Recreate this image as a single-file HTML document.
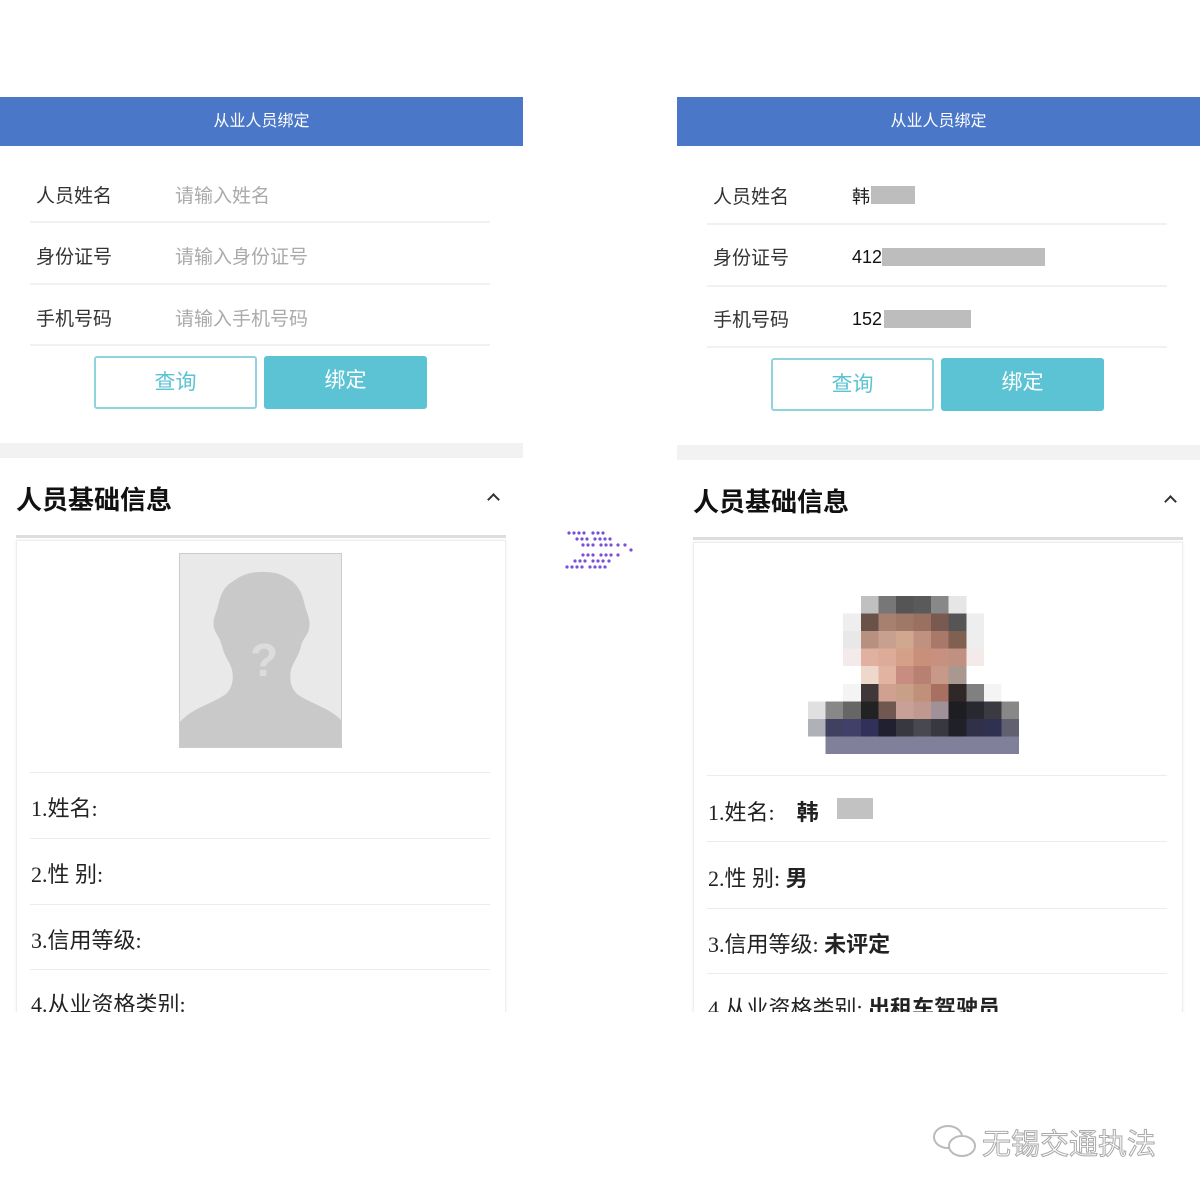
<!DOCTYPE html>
<html><head><meta charset="utf-8">
<style>
*{margin:0;padding:0;box-sizing:border-box}
body{width:1200px;height:1193px;background:#fff;position:relative;overflow:hidden;font-family:"Liberation Sans","Noto Sans CJK SC",sans-serif}
.a{position:absolute}
.panel{position:absolute;width:523px;height:915px;background:#fff;overflow:hidden}
.hdr{position:absolute;left:0;top:0;width:100%;height:49px;background:#4a77c8;color:#fff;font-size:16px;text-align:center;line-height:49px}
.lbl{position:absolute;left:36px;font-size:19px;color:#333}
.ph{position:absolute;left:175px;font-size:19px;color:#aaa}
.ln{position:absolute;left:30px;width:460px;height:2px;background:#f1f1f1}
.btn{position:absolute;top:259px;width:163px;height:53px;border-radius:3px;font-size:21px;text-align:center;line-height:50px}
.b1{left:94px;border:2px solid #8fd3de;color:#5bc3d3;background:#fff}
.b2{left:264px;background:#5bc3d3;color:#fff}
.band{position:absolute;left:0;top:346px;width:100%;height:15px;background:#f2f2f2}
.ttl{position:absolute;left:16px;top:383px;font-size:26px;font-weight:bold;color:#111}
.chev{position:absolute;left:489px;top:398px;width:9px;height:9px;border-left:2px solid #333;border-top:2px solid #333;transform:rotate(45deg)}
.tl{position:absolute;left:16px;top:438px;width:490px;height:3px;background:#ddd}
.card{position:absolute;left:16px;top:443px;width:490px;height:500px;border:1px solid #eee;border-bottom:none;box-shadow:0 0 3px #eee}
.il{position:absolute;left:30px;width:460px;height:1px;background:#ececec}
.it{position:absolute;left:31px;font-size:22px;color:#222;font-family:"Liberation Serif","Noto Sans CJK SC",serif}
.it b{font-family:"Liberation Sans","Noto Sans CJK SC",sans-serif}
</style></head><body>

<!-- LEFT -->
<div class="panel" style="left:0;top:97px">
  <div class="hdr">从业人员绑定</div>
  <div class="lbl" style="top:84px">人员姓名</div><div class="ph" style="top:84px">请输入姓名</div>
  <div class="ln" style="top:124px"></div>
  <div class="lbl" style="top:145px">身份证号</div><div class="ph" style="top:145px">请输入身份证号</div>
  <div class="ln" style="top:186px"></div>
  <div class="lbl" style="top:207px">手机号码</div><div class="ph" style="top:207px">请输入手机号码</div>
  <div class="ln" style="top:247px"></div>
  <div class="btn b1">查询</div><div class="btn b2">绑定</div>
  <div class="band"></div>
  <div class="ttl">人员基础信息</div><div class="chev"></div>
  <div class="tl"></div>
  <div class="card"></div>
  <div class="a" style="left:179px;top:456px;width:163px;height:195px;background:#e9e9e9;border:1px solid #ccc;overflow:hidden">
    <svg width="163" height="195" viewBox="0 0 163 195">
      <path d="M82 18c-14 0-22 4-30 10-10 6-12 16-14 24-2 8-6 14-4 22 2 6 6 10 8 18 2 10 8 16 10 24 2 10 0 18-6 24-14 10-34 14-46 28v27h163v-27c-12-14-32-18-46-28-6-6-8-14-6-24 2-8 8-14 10-24 2-8 8-12 8-18 2-8-2-14-4-22-2-10-6-22-18-28-8-5-14-6-24-6z" fill="#c9c9c9"/>
      <text x="70" y="122" font-size="46" font-weight="bold" fill="#dcdcdc" font-family="Liberation Sans">?</text>
    </svg>
  </div>
  <div class="il" style="top:675px"></div>
  <div class="it" style="top:694px">1.姓名:</div>
  <div class="il" style="top:741px"></div>
  <div class="it" style="top:760px">2.性 别:</div>
  <div class="il" style="top:807px"></div>
  <div class="it" style="top:826px">3.信用等级:</div>
  <div class="il" style="top:872px"></div>
  <div class="it" style="top:890px">4.从业资格类别:</div>
</div>

<!-- ARROW -->
<svg class="a" style="left:563px;top:529px" width="72" height="44">
  <g fill="#7a4fd8">
    <circle cx="6" cy="4" r="1.6"/><circle cx="11" cy="4" r="1.6"/><circle cx="16" cy="4" r="1.6"/><circle cx="21" cy="4" r="1.6"/><circle cx="30" cy="4" r="1.6"/><circle cx="35" cy="4" r="1.6"/><circle cx="40" cy="4" r="1.6"/>
    <circle cx="14" cy="10" r="1.6"/><circle cx="19" cy="10" r="1.6"/><circle cx="24" cy="10" r="1.6"/><circle cx="32" cy="10" r="1.6"/><circle cx="37" cy="10" r="1.6"/><circle cx="42" cy="10" r="1.6"/><circle cx="47" cy="10" r="1.6"/>
    <circle cx="20" cy="16" r="1.6"/><circle cx="25" cy="16" r="1.6"/><circle cx="30" cy="16" r="1.6"/><circle cx="38" cy="16" r="1.6"/><circle cx="43" cy="16" r="1.6"/><circle cx="48" cy="16" r="1.6"/><circle cx="55" cy="16" r="1.6"/><circle cx="62" cy="16" r="1.6"/><circle cx="68" cy="21" r="1.6"/>
    <circle cx="20" cy="26" r="1.6"/><circle cx="25" cy="26" r="1.6"/><circle cx="30" cy="26" r="1.6"/><circle cx="38" cy="26" r="1.6"/><circle cx="43" cy="26" r="1.6"/><circle cx="48" cy="26" r="1.6"/><circle cx="55" cy="26" r="1.6"/>
    <circle cx="12" cy="32" r="1.6"/><circle cx="17" cy="32" r="1.6"/><circle cx="22" cy="32" r="1.6"/><circle cx="30" cy="32" r="1.6"/><circle cx="35" cy="32" r="1.6"/><circle cx="40" cy="32" r="1.6"/><circle cx="46" cy="32" r="1.6"/>
    <circle cx="4" cy="38" r="1.6"/><circle cx="9" cy="38" r="1.6"/><circle cx="14" cy="38" r="1.6"/><circle cx="19" cy="38" r="1.6"/><circle cx="27" cy="38" r="1.6"/><circle cx="32" cy="38" r="1.6"/><circle cx="37" cy="38" r="1.6"/><circle cx="42" cy="38" r="1.6"/>
  </g>
</svg>

<!-- RIGHT -->
<div class="panel" style="left:677px;top:97px">
  <div class="hdr">从业人员绑定</div>
  <div class="lbl" style="top:85px">人员姓名</div><div class="lbl" style="left:175px;top:86px;font-size:18px;color:#222">韩</div><div class="a" style="left:194px;top:89px;width:44px;height:18px;background:#bdbdbd"></div>
  <div class="ln" style="top:126px"></div>
  <div class="lbl" style="top:146px">身份证号</div><div class="lbl" style="left:175px;top:150px;font-size:18px;color:#111">412</div><div class="a" style="left:205px;top:151px;width:163px;height:18px;background:#bdbdbd"></div>
  <div class="ln" style="top:188px"></div>
  <div class="lbl" style="top:208px">手机号码</div><div class="lbl" style="left:175px;top:212px;font-size:18px;color:#111">152</div><div class="a" style="left:207px;top:213px;width:87px;height:18px;background:#bdbdbd"></div>
  <div class="ln" style="top:249px"></div>
  <div class="btn b1" style="top:261px">查询</div><div class="btn b2" style="top:261px">绑定</div>
  <div class="band" style="top:348px"></div>
  <div class="ttl" style="top:385px">人员基础信息</div><div class="chev" style="top:400px"></div>
  <div class="tl" style="top:440px"></div>
  <div class="card" style="top:445px"></div>
  <div class="il" style="top:678px"></div>
  <div class="it" style="top:698px">1.姓名: &nbsp;&nbsp; <b>韩</b></div><div class="a" style="left:160px;top:701px;width:36px;height:21px;background:#c2c2c2"></div>
  <div class="il" style="top:744px"></div>
  <div class="it" style="top:764px">2.性 别: <b>男</b></div>
  <div class="il" style="top:811px"></div>
  <div class="it" style="top:830px">3.信用等级: <b>未评定</b></div>
  <div class="il" style="top:876px"></div>
  <div class="it" style="top:894px">4.从业资格类别: <b>出租车驾驶员</b></div>
</div>

<!-- pixel photo -->
<div class="a" style="left:808px;top:596px;width:211px;height:158px">
<svg width="211" height="158" viewBox="0 0 12 9" preserveAspectRatio="none" shape-rendering="crispEdges">
<g>
<rect x="3" y="0" width="1" height="1" fill="#c0c0c0"/><rect x="4" y="0" width="1" height="1" fill="#777"/><rect x="5" y="0" width="1" height="1" fill="#555"/><rect x="6" y="0" width="1" height="1" fill="#5a5a5a"/><rect x="7" y="0" width="1" height="1" fill="#888"/><rect x="8" y="0" width="1" height="1" fill="#e6e6e6"/>
<rect x="2" y="1" width="1" height="1" fill="#eee"/><rect x="3" y="1" width="1" height="1" fill="#6a5248"/><rect x="4" y="1" width="1" height="1" fill="#a88070"/><rect x="5" y="1" width="1" height="1" fill="#a07868"/><rect x="6" y="1" width="1" height="1" fill="#9a7060"/><rect x="7" y="1" width="1" height="1" fill="#7a5a50"/><rect x="8" y="1" width="1" height="1" fill="#555"/><rect x="9" y="1" width="1" height="1" fill="#eee"/>
<rect x="2" y="2" width="1" height="1" fill="#e8e8e8"/><rect x="3" y="2" width="1" height="1" fill="#b89080"/><rect x="4" y="2" width="1" height="1" fill="#c8a090"/><rect x="5" y="2" width="1" height="1" fill="#d0a890"/><rect x="6" y="2" width="1" height="1" fill="#c09080"/><rect x="7" y="2" width="1" height="1" fill="#a87868"/><rect x="8" y="2" width="1" height="1" fill="#806050"/><rect x="9" y="2" width="1" height="1" fill="#eee"/>
<rect x="2" y="3" width="1" height="1" fill="#f4eaea"/><rect x="3" y="3" width="1" height="1" fill="#e0b0a0"/><rect x="4" y="3" width="1" height="1" fill="#dcac98"/><rect x="5" y="3" width="1" height="1" fill="#d4a088"/><rect x="6" y="3" width="1" height="1" fill="#c89078"/><rect x="7" y="3" width="1" height="1" fill="#c89080"/><rect x="8" y="3" width="1" height="1" fill="#c09080"/><rect x="9" y="3" width="1" height="1" fill="#f4eaea"/>
<rect x="3" y="4" width="1" height="1" fill="#eed8cc"/><rect x="4" y="4" width="1" height="1" fill="#e0b4a0"/><rect x="5" y="4" width="1" height="1" fill="#c88c80"/><rect x="6" y="4" width="1" height="1" fill="#b88070"/><rect x="7" y="4" width="1" height="1" fill="#c89888"/><rect x="8" y="4" width="1" height="1" fill="#a89890"/>
<rect x="2" y="5" width="1" height="1" fill="#f4f4f4"/><rect x="3" y="5" width="1" height="1" fill="#403838"/><rect x="4" y="5" width="1" height="1" fill="#d0a090"/><rect x="5" y="5" width="1" height="1" fill="#c8a088"/><rect x="6" y="5" width="1" height="1" fill="#c09078"/><rect x="7" y="5" width="1" height="1" fill="#a87060"/><rect x="8" y="5" width="1" height="1" fill="#302828"/><rect x="9" y="5" width="1" height="1" fill="#808080"/><rect x="10" y="5" width="1" height="1" fill="#f4f4f4"/>
<rect x="0" y="6" width="1" height="1" fill="#e0e0e0"/><rect x="1" y="6" width="1" height="1" fill="#888"/><rect x="2" y="6" width="1" height="1" fill="#666"/><rect x="3" y="6" width="1" height="1" fill="#222"/><rect x="4" y="6" width="1" height="1" fill="#705850"/><rect x="5" y="6" width="1" height="1" fill="#c8a098"/><rect x="6" y="6" width="1" height="1" fill="#c09890"/><rect x="7" y="6" width="1" height="1" fill="#a09098"/><rect x="8" y="6" width="1" height="1" fill="#1e1e22"/><rect x="9" y="6" width="1" height="1" fill="#282830"/><rect x="10" y="6" width="1" height="1" fill="#3a3a40"/><rect x="11" y="6" width="1" height="1" fill="#888"/>
<rect x="0" y="7" width="1" height="1" fill="#b0b0b8"/><rect x="1" y="7" width="1" height="1" fill="#404060"/><rect x="2" y="7" width="1" height="1" fill="#404068"/><rect x="3" y="7" width="1" height="1" fill="#303058"/><rect x="4" y="7" width="1" height="1" fill="#202030"/><rect x="5" y="7" width="1" height="1" fill="#383840"/><rect x="6" y="7" width="1" height="1" fill="#484850"/><rect x="7" y="7" width="1" height="1" fill="#383840"/><rect x="8" y="7" width="1" height="1" fill="#202028"/><rect x="9" y="7" width="1" height="1" fill="#303048"/><rect x="10" y="7" width="1" height="1" fill="#303050"/><rect x="11" y="7" width="1" height="1" fill="#606070"/>
<rect x="1" y="8" width="11" height="1" fill="#80809a"/>
</g></svg></div>

<!-- watermark -->
<svg class="a" style="left:930px;top:1122px" width="50" height="40">
  <g fill="none" stroke="#bbb" stroke-width="2"><ellipse cx="18" cy="15" rx="14" ry="11"/><ellipse cx="32" cy="24" rx="13" ry="10" fill="#fff"/></g>
</svg>
<div class="a" style="left:982px;top:1121px;font-size:29px;color:#fff;-webkit-text-stroke:1px #aaa;font-family:'Noto Sans CJK SC',sans-serif">无锡交通执法</div>
</body></html>
